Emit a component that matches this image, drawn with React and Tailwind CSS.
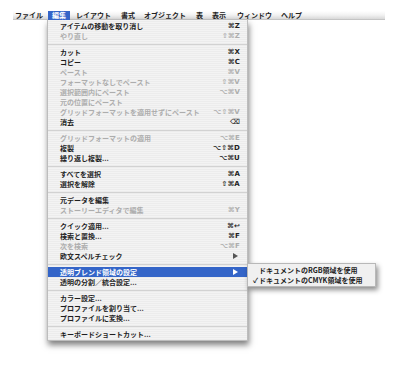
import React from 'react';

const font = { fontFamily: '"Noto Sans CJK JP", "Noto Sans", sans-serif' };

const menuBar = [
  { label: 'ファイル', w: 'w-[34px]' },
  { label: '編集', w: 'w-[22px]', active: true },
  { label: 'レイアウト', w: 'w-[45px]' },
  { label: '書式', w: 'w-[23px]' },
  { label: 'オブジェクト', w: 'w-[52px]' },
  { label: '表', w: 'w-[16px]' },
  { label: '表示', w: 'w-[25px]' },
  { label: 'ウィンドウ', w: 'w-[44px]' },
  { label: 'ヘルプ', w: 'w-[30px]' },
];

// null = separator
const items = [
  { t: 'アイテムの移動を取り消し', k: '⌘Z' },
  { t: 'やり直し', k: '⇧⌘Z', off: true },
  null,
  { t: 'カット', k: '⌘X' },
  { t: 'コピー', k: '⌘C' },
  { t: 'ペースト', k: '⌘V', off: true },
  { t: 'フォーマットなしでペースト', k: '⇧⌘V', off: true },
  { t: '選択範囲内にペースト', k: '⌥⌘V', off: true },
  { t: '元の位置にペースト', off: true },
  { t: 'グリッドフォーマットを適用せずにペースト', k: '⌥⇧⌘V', off: true },
  { t: '消去', k: '⌫' },
  null,
  { t: 'グリッドフォーマットの適用', k: '⌥⌘E', off: true },
  { t: '複製', k: '⌥⇧⌘D' },
  { t: '繰り返し複製...', k: '⌥⌘U' },
  null,
  { t: 'すべてを選択', k: '⌘A' },
  { t: '選択を解除', k: '⇧⌘A' },
  null,
  { t: '元データを編集' },
  { t: 'ストーリーエディタで編集', k: '⌘Y', off: true },
  null,
  { t: 'クイック適用...', k: '⌘↩' },
  { t: '検索と置換...', k: '⌘F' },
  { t: '次を検索', k: '⌥⌘F', off: true },
  { t: '欧文スペルチェック', sub: true },
  null,
  { t: '透明ブレンド領域の設定', sub: true, hl: true },
  { t: '透明の分割／統合設定...' },
  null,
  { t: 'カラー設定...' },
  { t: 'プロファイルを割り当て...' },
  { t: 'プロファイルに変換...' },
  null,
  { t: 'キーボードショートカット...' },
];

const Arrow = ({ white }) => (
  <svg width="5" height="6" viewBox="0 0 5 6" className="mr-[2px]">
    <path d="M0 0 L5 3 L0 6 Z" fill={white ? '#ffffff' : '#555555'} />
  </svg>
);

const Submenu = () => (
  <div className="absolute left-full top-[-4px] w-[129px] bg-[#f0f0f0] border border-[#b8b8b8] py-[1px] shadow-[2px_3px_5px_rgba(0,0,0,0.45)] font-bold text-[7px] text-[#222]">
    <div className="h-[10px] flex items-center pl-[11px]">ドキュメントのRGB領域を使用</div>
    <div className="h-[10px] flex items-center pl-[5px]">
      <span className="w-[6px] text-[7px]">✓</span>
      ドキュメントのCMYK領域を使用
    </div>
  </div>
);

export default function App() {
  return (
    <div className="w-[400px] h-[365px] bg-white overflow-hidden" style={font}>
      {/* メニューバー */}
      <div className="mt-[11px] ml-[13px] w-[372px] h-[9px] flex items-center pl-[2px] bg-gradient-to-b from-white via-[#f2f2f2] to-[#d8d8d8] border-b border-[#c4c4c4] text-[7px] font-bold text-[#222]">
        {menuBar.map((m) =>
          m.active ? (
            <div key={m.label} className={`${m.w} h-[9px] flex items-center justify-center bg-[#3465c8] text-white mr-[6px] ml-[-1px]`}>
              {m.label}
            </div>
          ) : (
            <div key={m.label} className={`${m.w} leading-none whitespace-nowrap`}>{m.label}</div>
          )
        )}
      </div>

      {/* 編集メニュー */}
      <div className="ml-[47px] w-[201px] bg-[#ededed] bg-[repeating-linear-gradient(0deg,#ececec_0px,#ececec_1px,#f3f3f3_1px,#f3f3f3_2px)] border border-[#bdbdbd] border-t-0 pt-[1px] pb-[1px] shadow-[1px_4px_6px_rgba(0,0,0,0.5)] text-[7px] font-bold">
        {items.map((it, i) =>
          it === null ? (
            <div key={i} className="h-[6px] flex items-center">
              <div className="w-full h-px bg-[#d2d2d2]" />
            </div>
          ) : (
            <div
              key={i}
              className={`relative h-[10px] flex items-center justify-between pl-[12px] pr-[7px] whitespace-nowrap ${
                it.hl ? 'bg-[#3465c8] text-white' : it.off ? 'text-[#adadad]' : 'text-[#1f1f1f]'
              }`}
            >
              <span>{it.t}</span>
              {it.k && (
                <span style={{ fontFamily: '"DejaVu Sans", "Noto Sans CJK JP", sans-serif' }} className="text-[7px] font-bold tracking-[0.2px]">
                  {it.k}
                </span>
              )}
              {it.sub && <Arrow white={it.hl} />}
              {it.hl && <Submenu />}
            </div>
          )
        )}
      </div>
    </div>
  );
}
